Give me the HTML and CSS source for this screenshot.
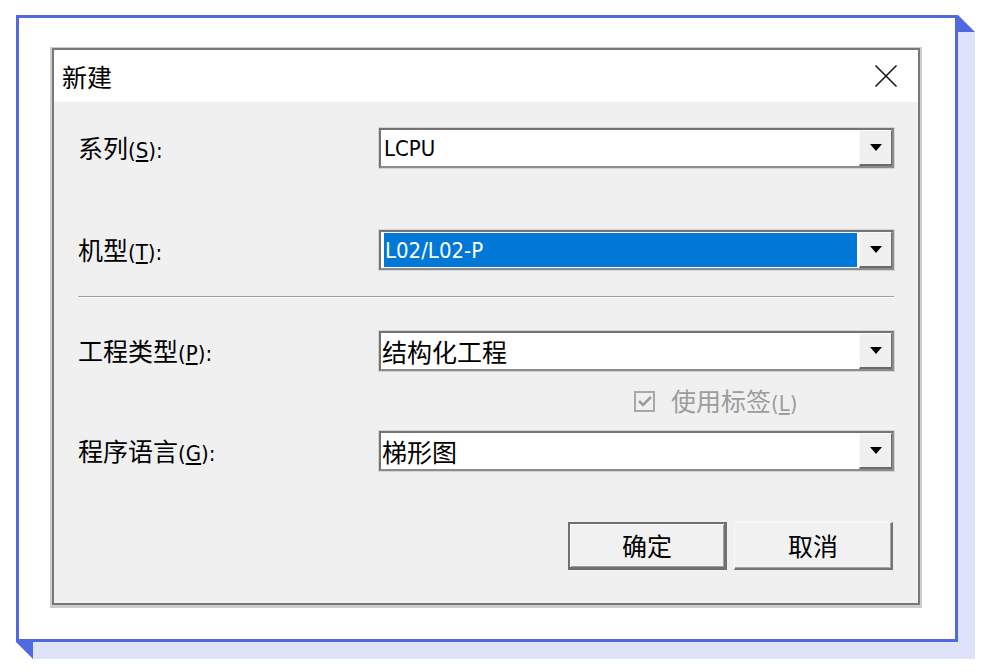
FILE: index.html
```html
<!DOCTYPE html>
<html lang="zh-CN">
<head>
<meta charset="utf-8">
<title>新建</title>
<link rel="stylesheet" href="styles.css">
</head>
<body>
<div class="frame">
  <div class="dialog">
    <div class="titlebar">
      <span class="title">新建</span>
      <svg class="close" width="24" height="24" viewBox="0 0 24 24"><path d="M1.5 1.5 L22.5 22.5 M22.5 1.5 L1.5 22.5" stroke="#1a1a1a" stroke-width="1.6" fill="none"/></svg>
    </div>
    <div class="body">
      <div class="row r1">
        <div class="label">系列<span class="en">(<u>S</u>):</span></div>
        <div class="combo">
          <div class="field"><span class="en">LCPU</span></div>
          <div class="dd"><svg width="12" height="7" viewBox="0 0 12 7"><polygon points="0,0 12,0 6,7" fill="#000"/></svg></div>
        </div>
      </div>
      <div class="row r2">
        <div class="label">机型<span class="en">(<u>T</u>):</span></div>
        <div class="combo">
          <div class="field"><span class="sel"><span class="en">L02/L02-P</span></span></div>
          <div class="dd"><svg width="12" height="7" viewBox="0 0 12 7"><polygon points="0,0 12,0 6,7" fill="#000"/></svg></div>
        </div>
      </div>
      <div class="sep"></div>
      <div class="row r3">
        <div class="label">工程类型<span class="en">(<u>P</u>):</span></div>
        <div class="combo">
          <div class="field cjk">结构化工程</div>
          <div class="dd"><svg width="12" height="7" viewBox="0 0 12 7"><polygon points="0,0 12,0 6,7" fill="#000"/></svg></div>
        </div>
      </div>
      <div class="check-row">
        <span class="checkbox"><svg width="16" height="14" viewBox="0 0 16 14"><path d="M2 7 L6 11 L14 3" stroke="#9c9c9c" stroke-width="2.6" fill="none"/></svg></span>
        <span class="check-label">使用标签<span class="en">(<u>L</u>)</span></span>
      </div>
      <div class="row r4">
        <div class="label">程序语言<span class="en">(<u>G</u>):</span></div>
        <div class="combo">
          <div class="field cjk">梯形图</div>
          <div class="dd"><svg width="12" height="7" viewBox="0 0 12 7"><polygon points="0,0 12,0 6,7" fill="#000"/></svg></div>
        </div>
      </div>
      <div class="buttons">
        <button class="btn default">确定</button>
        <button class="btn">取消</button>
      </div>
    </div>
  </div>
</div>
</body>
</html>
```
FILE: styles.css
```css
html, body {
  margin: 0;
  padding: 0;
  background: #ffffff;
}
body {
  font-family: "Noto Sans CJK SC", "Noto Sans", sans-serif;
  font-size: 25px;
  color: #000;
  padding: 15px 0 0 16px;
  width: 985px;
  height: 672px;
  box-sizing: border-box;
  overflow: hidden;
}
.frame {
  position: relative;
  width: 942px;
  height: 627px;
  box-sizing: border-box;
  border: 3px solid #5068e0;
  background: #ffffff;
  box-shadow: 17px 17px 0 #dee3f9;
  padding: 30px 0 0 33px;
}
.frame::before {
  content: "";
  position: absolute;
  right: -20px;
  top: -3px;
  width: 17px;
  height: 17px;
  background: #5068e0;
  clip-path: polygon(0 0, 100% 100%, 0 100%);
}
.frame::after {
  content: "";
  position: absolute;
  left: -3px;
  bottom: -20px;
  width: 17px;
  height: 17px;
  background: #5068e0;
  clip-path: polygon(0 0, 100% 0, 100% 100%);
}
.en {
  font-family: "DejaVu Sans Condensed", "DejaVu Sans", sans-serif;
  font-stretch: condensed;
  font-size: 22px;
}
.dialog {
  width: 868px;
  height: 557px;
  box-sizing: border-box;
  border: 2px solid #787878;
  background: #f0f0f0;
  box-shadow: 0 1px 0 2px #cdcdcd;
  display: flex;
  flex-direction: column;
}
.titlebar {
  height: 52px;
  background: #ffffff;
  display: flex;
  align-items: center;
  justify-content: space-between;
  padding: 0 20px 0 8px;
  flex: none;
}
.title {
  font-size: 25px;
}
.close {
  display: block;
}
.body {
  padding: 26px 24px 0 24px;
  flex: 1;
}
.row {
  display: grid;
  grid-template-columns: 301px 1fr;
  align-items: center;
  height: 40px;
}
.label {
  white-space: nowrap;
  line-height: 1;
}
.r2 { margin-top: 62px; }
.sep {
  margin-top: 26px;
  height: 0;
  border-top: 1px solid #a0a0a0;
  border-bottom: 1px solid #ffffff;
}
.r3 { margin-top: 33px; }
.check-row {
  margin-top: 18px;
  height: 24px;
  display: flex;
  align-items: center;
  padding-left: 556px;
  color: #9c9c9c;
}
.checkbox {
  width: 21px;
  height: 21px;
  box-sizing: border-box;
  border: 2px solid #a8a8a8;
  background: #f0f0f0;
  display: flex;
  align-items: center;
  justify-content: center;
  margin-right: 16px;
}
.check-label {
  line-height: 1;
  white-space: nowrap;
}
.r4 { margin-top: 18px; }
.combo {
  height: 40px;
  box-sizing: border-box;
  border: 2px solid;
  border-color: #747474 #8c8c8c #8c8c8c #747474;
  box-shadow: 0 0 0 1px #d4d4d4;
  background: #ffffff;
  display: flex;
}
.field {
  flex: 1;
  display: flex;
  align-items: center;
  padding-left: 3px;
}
.field.cjk {
  padding-left: 1px;
  line-height: 1;
}
.sel {
  flex: 1;
  align-self: stretch;
  margin: 1px 2px 1px 0;
  padding-left: 1px;
  background: #0078d7;
  color: #ffffff;
  display: flex;
  align-items: center;
}
.dd {
  width: 33px;
  box-sizing: border-box;
  background: #f0f0f0;
  border-top: 1px solid #fafafa;
  border-left: 1px solid #fafafa;
  border-right: 1px solid #6a6a6a;
  border-bottom: 2px solid #6a6a6a;
  display: flex;
  align-items: center;
  justify-content: center;
}
.dd svg { display: block; }
.buttons {
  margin-top: 51px;
  display: flex;
  justify-content: flex-end;
  gap: 7px;
  padding-right: 1px;
}
.btn {
  width: 159px;
  height: 48px;
  box-sizing: border-box;
  font-family: "Noto Sans CJK SC", sans-serif;
  font-size: 25px;
  color: #000;
  background: #f1f1f1;
  border-style: solid;
  border-width: 1px 2px 2px 1px;
  border-color: #fafafa #737373 #737373 #fafafa;
  box-shadow: inset -1px -1px 0 #a8a8a8;
  padding: 0;
  line-height: 1;
}
.btn.default {
  border-style: solid;
  border-width: 2px 3px 3px 2px;
  border-color: #707070;
  box-shadow: inset 1px 1px 0 #ffffff, inset -1px -1px 0 #a0a0a0;
}
```
